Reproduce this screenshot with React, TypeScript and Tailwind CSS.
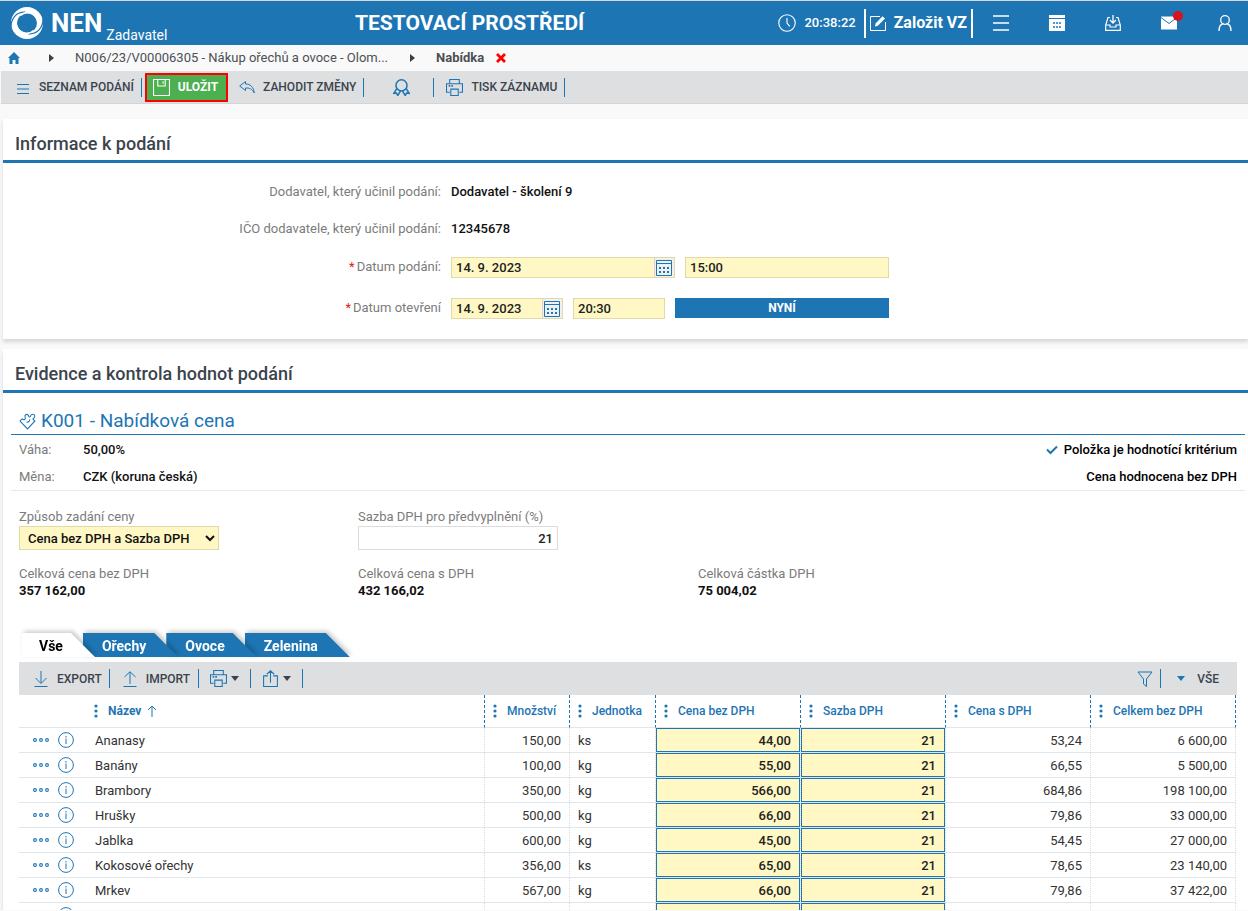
import { useState } from "react";
import type { ReactNode } from "react";
import clsx from "clsx";

type Item = {
  name: string;
  amount: string;
  unit: string;
  price: string;
  vat: string;
  priceVat: string;
  total: string;
};

const ITEMS: Item[] = [
  { name: "Ananasy", amount: "150,00", unit: "ks", price: "44,00", vat: "21", priceVat: "53,24", total: "6 600,00" },
  { name: "Banány", amount: "100,00", unit: "kg", price: "55,00", vat: "21", priceVat: "66,55", total: "5 500,00" },
  { name: "Brambory", amount: "350,00", unit: "kg", price: "566,00", vat: "21", priceVat: "684,86", total: "198 100,00" },
  { name: "Hrušky", amount: "500,00", unit: "kg", price: "66,00", vat: "21", priceVat: "79,86", total: "33 000,00" },
  { name: "Jablka", amount: "600,00", unit: "kg", price: "45,00", vat: "21", priceVat: "54,45", total: "27 000,00" },
  { name: "Kokosové ořechy", amount: "356,00", unit: "ks", price: "65,00", vat: "21", priceVat: "78,65", total: "23 140,00" },
  { name: "Mrkev", amount: "567,00", unit: "kg", price: "66,00", vat: "21", priceVat: "79,86", total: "37 422,00" },
  { name: "", amount: "", unit: "", price: "", vat: "", priceVat: "", total: "" },
];

const TABS = ["Vše", "Ořechy", "Ovoce", "Zelenina"];
const TAB_LAYER = ["z-40", "z-30", "z-20", "z-10"];

/* ---------- icons ---------- */

function Icon({ children, className = "size-4" }: { children: ReactNode; className?: string }) {
  return (
    <svg
      viewBox="0 0 16 16"
      className={clsx("shrink-0", className)}
      fill="none"
      stroke="currentColor"
      strokeWidth="1"
      aria-hidden="true"
    >
      {children}
    </svg>
  );
}

function Logo() {
  return (
    <svg viewBox="0 0 32 32" className="size-8 shrink-0" aria-hidden="true">
      <circle cx="16" cy="16" r="16" fill="#fff" />
      <circle cx="16" cy="16" r="10" fill="#1d75b4" />
      <path d="M0 21.500C-.5 12 5 4.500 14.500 5.200" fill="none" stroke="#1d75b4" strokeWidth="1.200" />
      <path d="M32 10.500C32.500 20 27 27.500 17.500 26.800" fill="none" stroke="#1d75b4" strokeWidth="1.200" />
      <path d="M9.500 8.500C15 3 24 6 26.500 13.500" fill="none" stroke="#fff" strokeWidth="1.500" />
      <path d="M22.500 23.500C17 29 8 26 5.500 18.500" fill="none" stroke="#fff" strokeWidth="1.500" />
    </svg>
  );
}

function PrinterIcon() {
  return (
    <Icon className="size-[17px]">
      <path d="M3.500 4.500V.5h9v4M3.500 12.500h-3v-8h15v8h-3" />
      <path d="M4.500 9.500h7v6h-7z" />
      <path d="M2.500 6.500h1.500M5 6.500h1.500" strokeWidth="1.500" />
    </Icon>
  );
}

function CalendarIcon() {
  return (
    <Icon>
      <path d="M.5.5h15v15H.5zM.5 3.500h15" />
      <path d="M3 8h2M7 8h2M11 8h2M3 12h2M7 12h2M11 12h2" strokeWidth="2" />
    </Icon>
  );
}

function Caret({ className }: { className?: string }) {
  return (
    <svg viewBox="0 0 8 5" className={clsx("h-[5px] w-2 shrink-0", className)} fill="currentColor" aria-hidden="true">
      <path d="M0 0h8L4 5z" />
    </svg>
  );
}

function CrumbArrow() {
  return (
    <svg viewBox="0 0 5 8" className="h-2 w-[5px] shrink-0" fill="#3a3f44" aria-hidden="true">
      <path d="M0 0l5 4-5 4z" />
    </svg>
  );
}

function ColumnDots() {
  return (
    <svg viewBox="0 0 4 14" className="h-3.5 w-1 shrink-0" fill="currentColor" aria-hidden="true">
      <circle cx="2" cy="2" r="1.600" />
      <circle cx="2" cy="7" r="1.600" />
      <circle cx="2" cy="12" r="1.600" />
    </svg>
  );
}

function Divider() {
  return <span className="h-[19px] w-px shrink-0 bg-[#1d75b4]" />;
}

/* ---------- header ---------- */

function NavButton({ label, children }: { label: string; children: ReactNode }) {
  return (
    <button type="button" aria-label={label} className="relative">
      {children}
    </button>
  );
}

function Header() {
  return (
    <header className="flex h-[45px] shrink-0 items-center border-t border-[#d5d9dc] bg-[#1d75b4] text-white">
      <div className="flex w-[355px] shrink-0 items-center pl-[11px]">
        <Logo />
        <span className="ml-2 text-[26px] leading-8 font-bold">NEN</span>
        <span className="mt-6 ml-1 text-sm leading-4">Zadavatel</span>
      </div>
      <h1 className="flex-1 text-[21px] leading-6 font-bold whitespace-nowrap">TESTOVACÍ PROSTŘEDÍ</h1>
      <div className="flex shrink-0 items-center">
        <Icon className="size-[18px]">
          <circle cx="8" cy="8" r="7.300" />
          <path d="M8 3.500V8l2.500 3" />
        </Icon>
        <time className="mx-2 text-[13px] font-medium">20:38:22</time>
        <button
          type="button"
          className="flex h-[29px] items-center gap-2 border-x-2 border-white px-1 text-base font-bold whitespace-nowrap"
        >
          <Icon>
            <path d="M10 1.500H.5v14h15V7" />
            <path d="M5 11.500l.6-3L12.500 1.200l2.500 2.400-7.200 7.200z" fill="currentColor" stroke="none" />
          </Icon>
          Založit VZ
        </button>
      </div>
      <nav className="flex shrink-0 items-center gap-10 pr-[15px] pl-5">
        <NavButton label="Menu">
          <Icon>
            <path d="M0 1h16M0 8h16M0 15h16" strokeWidth="1.500" />
          </Icon>
        </NavButton>
        <NavButton label="Kalendář">
          <Icon>
            <path d="M0 0h16v3H0zM0 4h16v12H0z" fill="currentColor" stroke="none" />
            <path d="M4 8h2M7 8h2M10 8h2M4 12h2M7 12h2M10 12h2" stroke="#1d75b4" strokeWidth="1.500" />
          </Icon>
        </NavButton>
        <NavButton label="Přijaté">
          <Icon>
            <path d="M8 0v8M5 5l3 3 3-3" strokeWidth="1.300" />
            <path d="M5 2.500H3L.7 10v5.300h14.600V10L13 2.500h-2M.7 10h4.300v2h6v-2h4.300" strokeWidth="1.200" />
          </Icon>
        </NavButton>
        <NavButton label="Zprávy">
          <Icon>
            <path d="M-.5 1.500h17v13h-17z" fill="currentColor" stroke="none" />
            <path d="M0 2.500l8 6 8-6" stroke="#1d75b4" />
          </Icon>
          <span className="absolute -top-1 -right-1.5 size-2.5 rounded-full bg-[#d8131b]" />
        </NavButton>
        <NavButton label="Uživatel">
          <Icon>
            <circle cx="8" cy="5" r="4.300" strokeWidth="1.300" />
            <path d="M2 16c0-4.500 2-7 4.500-7.500M14 16c0-4.500-2-7-4.500-7.500" strokeWidth="1.300" />
          </Icon>
        </NavButton>
      </nav>
    </header>
  );
}

function Breadcrumb() {
  return (
    <nav className="flex h-[26px] shrink-0 items-center pl-2 text-[13px] text-[#4b5055]">
      <a href="#home" aria-label="Domů" className="text-[#1d75b4]">
        <svg viewBox="0 0 12 12" className="size-3" fill="currentColor" aria-hidden="true">
          <path d="M6 0l6 6h-1.500v6h-3V8h-3v4h-3V6H0l6-6z" />
        </svg>
      </a>
      <span className="ml-[29px]">
        <CrumbArrow />
      </span>
      <a href="#vz" className="mr-[22px] ml-[21px] whitespace-nowrap">
        N006/23/V00006305 - Nákup ořechů a ovoce - Olom...
      </a>
      <CrumbArrow />
      <span className="ml-[21px] font-bold">Nabídka</span>
      <button type="button" aria-label="Zavřít" className="ml-3 text-[#f00]">
        <svg viewBox="0 0 10 10" className="size-2.5" stroke="currentColor" strokeWidth="2.800" aria-hidden="true">
          <path d="M1 1l8 8M9 1l-8 8" />
        </svg>
      </button>
    </nav>
  );
}

function Toolbar() {
  return (
    <div className="ml-px flex h-[33px] shrink-0 items-center border-b border-[#d5d5d5] bg-[#dedfe1] text-xs font-medium whitespace-nowrap text-[#3b444d]">
      <button type="button" className="mr-[7px] ml-4 flex items-center gap-2.5">
        <Icon className="mt-1 size-3 text-[#1d75b4]">
          <path d="M0 2h16M0 8h16M0 14h16" strokeWidth="1.400" />
        </Icon>
        SEZNAM PODÁNÍ
      </button>
      <Divider />
      <button
        type="button"
        className="mr-[11px] ml-[3px] flex h-[29px] items-center gap-2 border-2 border-[#f00] bg-[#4caf50] pr-2 pl-1.5 font-bold text-white"
      >
        <Icon className="size-[17px]">
          <path d="M.5.5h15v15H.5zM4.500.5v6h7v-6M9.500 2v2.500" />
        </Icon>
        ULOŽIT
      </button>
      <button type="button" className="mr-[7px] flex items-center gap-2">
        <Icon className="size-4 text-[#1d75b4]">
          <path d="M6.500 2.500L.7 7l5.800 4.500V9c4-.3 6.500 1 8.800 5C14.500 8 11.500 5 6.500 5z" />
        </Icon>
        ZAHODIT ZMĚNY
      </button>
      <Divider />
      <button type="button" aria-label="Podpis" className="mr-[23px] ml-[29px] text-[#1d75b4]">
        <Icon className="size-[17px]">
          <circle cx="8" cy="6" r="5.200" strokeWidth="1.400" />
          <path d="M3.500 9L.8 13.500l2.400-.2 1.300 2.200L7 11.300M12.500 9l2.700 4.500-2.400-.2-1.300 2.200L9 11.300" strokeWidth="1.400" />
        </Icon>
      </button>
      <Divider />
      <button type="button" className="mr-[7px] ml-3 flex items-center gap-2">
        <span className="text-[#1d75b4]">
          <PrinterIcon />
        </span>
        TISK ZÁZNAMU
      </button>
      <Divider />
    </div>
  );
}

/* ---------- submission info ---------- */

function Card({ title, className, children }: { title: string; className?: string; children: ReactNode }) {
  return (
    <section className={clsx("ml-[3px] bg-white shadow-[0_3px_4px_rgba(0,0,0,0.14)]", className)}>
      <h2 className="border-b-[3px] border-[#1d75b4] pt-[13px] pb-1 pl-3 text-lg leading-6 font-medium text-[#3b444d]">
        {title}
      </h2>
      {children}
    </section>
  );
}

const INPUT =
  "h-[21px] min-w-0 border border-[#e0d9a8] bg-[#fff8c4] px-1 text-[13px] font-medium text-[#222] outline-none";

function FormRow({
  label,
  id,
  required,
  tall,
  children,
}: {
  label: string;
  id?: string;
  required?: boolean;
  tall?: boolean;
  children: ReactNode;
}) {
  return (
    <div className={clsx("flex items-center text-[13px]", tall ? "h-[41px]" : "h-[37px]")}>
      <label htmlFor={id} className={clsx("w-[438px] shrink-0 text-right text-[#7b7b7b]", tall && "pb-0.5")}>
        {required && <span className="mr-0.5 text-[#e02020]">*</span>}
        {label}
      </label>
      <div className="ml-2.5 flex w-[438px] items-start gap-2.5 font-medium text-[#111]">{children}</div>
    </div>
  );
}

function DateInput({ id, className }: { id: string; className: string }) {
  return (
    <div className={clsx("flex h-[21px] border border-[#e0d9a8] bg-[#fff8c4]", className)}>
      <input
        id={id}
        defaultValue="14. 9. 2023"
        className="min-w-0 flex-1 px-1 text-[13px] font-medium text-[#222] outline-none"
      />
      <button
        type="button"
        aria-label="Vybrat datum"
        className="flex w-5 shrink-0 items-center border-l border-[#d5d5d5] bg-[#f0f0f0] pl-px text-[#1d75b4]"
      >
        <CalendarIcon />
      </button>
    </div>
  );
}

function SubmissionInfo() {
  return (
    <Card title="Informace k podání" className="mt-[15px]">
      <div className="py-2.5">
        <FormRow label="Dodavatel, který učinil podání:">Dodavatel - školení 9</FormRow>
        <FormRow label="IČO dodavatele, který učinil podání:">12345678</FormRow>
        <FormRow label="Datum podání:" id="submitted" required tall>
          <DateInput id="submitted" className="w-56" />
          <input aria-label="Čas podání" defaultValue="15:00" className={clsx(INPUT, "flex-1")} />
        </FormRow>
        <FormRow label="Datum otevření" id="opened" required tall>
          <DateInput id="opened" className="w-28" />
          <input aria-label="Čas otevření" defaultValue="20:30" className={clsx(INPUT, "w-[92px]")} />
          <button type="button" className="h-5 flex-1 bg-[#1d75b4] text-xs font-bold text-white">
            NYNÍ
          </button>
        </FormRow>
      </div>
    </Card>
  );
}

/* ---------- values ---------- */

function Total({ label, value }: { label: string; value: string }) {
  return (
    <div className="leading-[17px]">
      <div className="text-[#7b7b7b]">{label}</div>
      <div className="font-bold text-[#111]">{value}</div>
    </div>
  );
}

function Criterion() {
  return (
    <div className="mr-[3px] ml-2 text-[13px]">
      <h3 className="mt-4 flex h-[26px] items-center gap-[5px] border-b border-[#1d75b4] pl-2 text-[19px] text-[#1d75b4]">
        <Icon className="size-[17px]">
          <path d="M.8 7.500L3 5.500c2 1.500 3.500.5 2.800-1.500-.8-2 1.200-3.500 2.700-2.200M8.500 1.800c.8 1 .4 2 1.500 2 1 .2.600-1.500 1.800-2.300 1.700-1 3.500.5 3 2.200-.4 1.300-1.800 1.300-1.600 2.300l1.800 1.500L8 15 .8 7.500M7 8.500c1.800.5 3.500-1 3-2.500" />
        </Icon>
        K001 - Nabídková cena
      </h3>
      <div className="flex justify-between border-b border-[#e9e9e9] pt-px pl-2 leading-[27px]">
        <dl className="grid grid-cols-[64px_auto]">
          <dt className="text-[#7b7b7b]">Váha:</dt>
          <dd className="font-medium text-[#111]">50,00%</dd>
          <dt className="text-[#7b7b7b]">Měna:</dt>
          <dd className="font-medium text-[#111]">CZK (koruna česká)</dd>
        </dl>
        <div className="pr-2 text-right font-medium text-black">
          <div className="flex items-center justify-end gap-1.5">
            <svg viewBox="0 0 12 10" className="h-2.5 w-3 text-[#1d75b4]" fill="none" stroke="currentColor" strokeWidth="2" aria-hidden="true">
              <path d="M1 4.500l3.500 3.500L11 1.500" />
            </svg>
            Položka je hodnotící kritérium
          </div>
          <div>Cena hodnocena bez DPH</div>
        </div>
      </div>
      <div className="grid grid-cols-[339px_340px_auto] gap-y-[15px] pt-[17px] pl-2">
        <div className="flex flex-col leading-[18px]">
          <label htmlFor="mode" className="text-[#7b7b7b]">
            Způsob zadání ceny
          </label>
          <select
            id="mode"
            className="h-6 w-[200px] border border-[#e0d9a8] bg-[#fff8c4] px-1 font-medium text-[#111] outline-none"
          >
            <option>Cena bez DPH a Sazba DPH</option>
          </select>
        </div>
        <div className="col-span-2 flex flex-col leading-[18px]">
          <label htmlFor="vat" className="text-[#7b7b7b]">
            Sazba DPH pro předvyplnění (%)
          </label>
          <input
            id="vat"
            defaultValue="21"
            className="h-6 w-[200px] border border-[#dcdcdc] bg-white px-1 text-right font-medium text-[#222] outline-none"
          />
        </div>
        <Total label="Celková cena bez DPH" value="357 162,00" />
        <Total label="Celková cena s DPH" value="432 166,02" />
        <Total label="Celková částka DPH" value="75 004,02" />
      </div>
    </div>
  );
}

function Tabs() {
  const [active, setActive] = useState(0);

  return (
    <div role="tablist" className="mt-[34px] mb-[5px] ml-[19px] flex h-6 text-sm leading-6">
      {TABS.map((tab, i) => (
        <div
          key={tab}
          className={clsx("relative drop-shadow-[2px_-2px_2px_rgba(0,0,0,0.2)]", i > 0 && "-ml-3", TAB_LAYER[i])}
        >
          <button
            type="button"
            role="tab"
            aria-selected={active === i}
            onClick={() => setActive(i)}
            className={clsx(
              "flex h-6 items-center pt-0.5 pr-8 font-bold [clip-path:polygon(0_0,calc(100%-24px)_0,100%_100%,0_100%)]",
              active === i ? "bg-white pl-[17px] text-black" : "bg-[#1d75b4] pl-[19px] text-white"
            )}
          >
            {tab}
          </button>
        </div>
      ))}
    </div>
  );
}

function TableToolbar() {
  return (
    <div className="flex h-[33px] items-center bg-[#dedfe1] text-xs font-medium text-[#3b444d]">
      <button type="button" className="mr-[7px] ml-3.5 flex items-center gap-2">
        <Icon className="size-4 text-[#1d75b4]">
          <path d="M8 0v12M2.500 7L8 12.500 13.500 7M1.500 15.500h13" />
        </Icon>
        EXPORT
      </button>
      <Divider />
      <button type="button" className="mr-2 ml-3 flex items-center gap-2">
        <Icon className="size-4 text-[#1d75b4]">
          <path d="M8 13V1M2.500 6L8 .7 13.500 6M1.500 15.500h13" />
        </Icon>
        IMPORT
      </button>
      <Divider />
      <button type="button" aria-label="Tisk" className="mr-[11px] ml-[11px] flex items-center gap-1">
        <span className="text-[#1d75b4]">
          <PrinterIcon />
        </span>
        <Caret />
      </button>
      <Divider />
      <button type="button" aria-label="Sdílet" className="mr-[11px] ml-[11px] flex items-center gap-1">
        <Icon className="size-[17px] text-[#1d75b4]">
          <path d="M5.500 5.500h-4v10h13v-10h-4M8 12V1M4.500 4L8 .7 11.500 4" />
        </Icon>
        <Caret />
      </button>
      <Divider />
      <button type="button" aria-label="Filtr" className="mr-[7px] ml-auto text-[#1d75b4]">
        <Icon>
          <path d="M1 1h14l-5.500 7v7.500l-3-2.500V8z" />
        </Icon>
      </button>
      <Divider />
      <button type="button" className="mr-[18px] ml-4 flex items-center gap-3">
        <Caret className="text-[#1d75b4]" />
        VŠE
      </button>
    </div>
  );
}

function HeadCell({ label, sorted }: { label: string; sorted?: boolean }) {
  return (
    <th
      scope="col"
      className="border-r border-b border-r-[#1d75b4] border-b-[#dfe7ea] p-0 text-left text-xs font-medium text-[#1d75b4] [border-right-style:dashed]"
    >
      <div className="flex items-center gap-2.5 pl-2 whitespace-nowrap">
        <ColumnDots />
        <span className={clsx(sorted && "font-bold")}>{label}</span>
        {sorted && (
          <svg viewBox="0 0 10 12" className="-ml-1 h-3 w-2.5" fill="none" stroke="currentColor" aria-hidden="true">
            <path d="M5 12V1M1 5l4-4 4 4" />
          </svg>
        )}
      </div>
    </th>
  );
}

const CELL = "border-r border-b border-r-[#d5dade] border-b-[#dfe7ea] [border-right-style:dotted]";

function CellInput({ label, value }: { label: string; value: string }) {
  return (
    <td className={clsx(CELL, "p-0")}>
      <input
        aria-label={label}
        defaultValue={value}
        className="block h-6 w-full border border-[#1d75b4] bg-[#fff8c4] pr-2 text-right font-medium text-[#222] outline-none"
      />
    </td>
  );
}

function ItemRow({ item }: { item: Item }) {
  return (
    <tr className="h-[25px]">
      <td className="border-b border-[#dfe7ea] p-0 text-[#1d75b4]">
        <div className="flex items-center gap-[9px] pl-3.5">
          <button type="button" aria-label="Akce">
            <svg viewBox="0 0 16 6" className="h-1.5 w-4" fill="none" stroke="currentColor" strokeWidth="1.100" aria-hidden="true">
              <circle cx="2" cy="3" r="1.400" />
              <circle cx="8" cy="3" r="1.400" />
              <circle cx="14" cy="3" r="1.400" />
            </svg>
          </button>
          <button type="button" aria-label="Detail">
            <Icon>
              <circle cx="8" cy="8" r="7.400" />
              <path d="M8 6.500V12M8 4v1.500" />
            </Icon>
          </button>
        </div>
      </td>
      <td className={clsx(CELL, "pt-0.5 pb-0 pl-[9px]")}>{item.name}</td>
      <td className={clsx(CELL, "pt-0.5 pr-2 pb-0 text-right")}>{item.amount}</td>
      <td className={clsx(CELL, "pt-0.5 pb-0 pl-2")}>{item.unit}</td>
      <CellInput label="Cena bez DPH" value={item.price} />
      <CellInput label="Sazba DPH" value={item.vat} />
      <td className={clsx(CELL, "pt-0.5 pr-2 pb-0 text-right")}>{item.priceVat}</td>
      <td className={clsx(CELL, "pt-0.5 pr-2 pb-0 text-right")}>{item.total}</td>
    </tr>
  );
}

function ItemsTable() {
  return (
    <div className="pr-px">
      <table className="w-full table-fixed border-separate border-spacing-0 text-[13px] leading-5 text-[#333]">
        <colgroup>
          <col className="w-[67px]" />
          <col />
          <col className="w-[85px]" />
          <col className="w-[86px]" />
          <col className="w-[145px]" />
          <col className="w-[145px]" />
          <col className="w-[145px]" />
          <col className="w-[145px]" />
        </colgroup>
        <thead>
          <tr className="h-[33px]">
            <td className="border-b border-[#dfe7ea] p-0" />
            <HeadCell label="Název" sorted />
            <HeadCell label="Množství" />
            <HeadCell label="Jednotka" />
            <HeadCell label="Cena bez DPH" />
            <HeadCell label="Sazba DPH" />
            <HeadCell label="Cena s DPH" />
            <HeadCell label="Celkem bez DPH" />
          </tr>
        </thead>
        <tbody>
          {ITEMS.map((item, i) => (
            <ItemRow key={i} item={item} />
          ))}
        </tbody>
      </table>
    </div>
  );
}

export default function App() {
  return (
    <div className="flex h-screen flex-col overflow-hidden bg-[#f9f9f9] pb-px font-['Roboto','Liberation_Sans',sans-serif]">
      <Header />
      <Breadcrumb />
      <Toolbar />
      <main className="flex min-h-0 flex-1 flex-col overflow-hidden">
        <SubmissionInfo />
        <Card title="Evidence a kontrola hodnot podání" className="mt-2.5 min-h-0 flex-1 overflow-hidden">
          <Criterion />
          <Tabs />
          <div className="mr-[11px] ml-4">
            <TableToolbar />
            <ItemsTable />
          </div>
        </Card>
      </main>
    </div>
  );
}
